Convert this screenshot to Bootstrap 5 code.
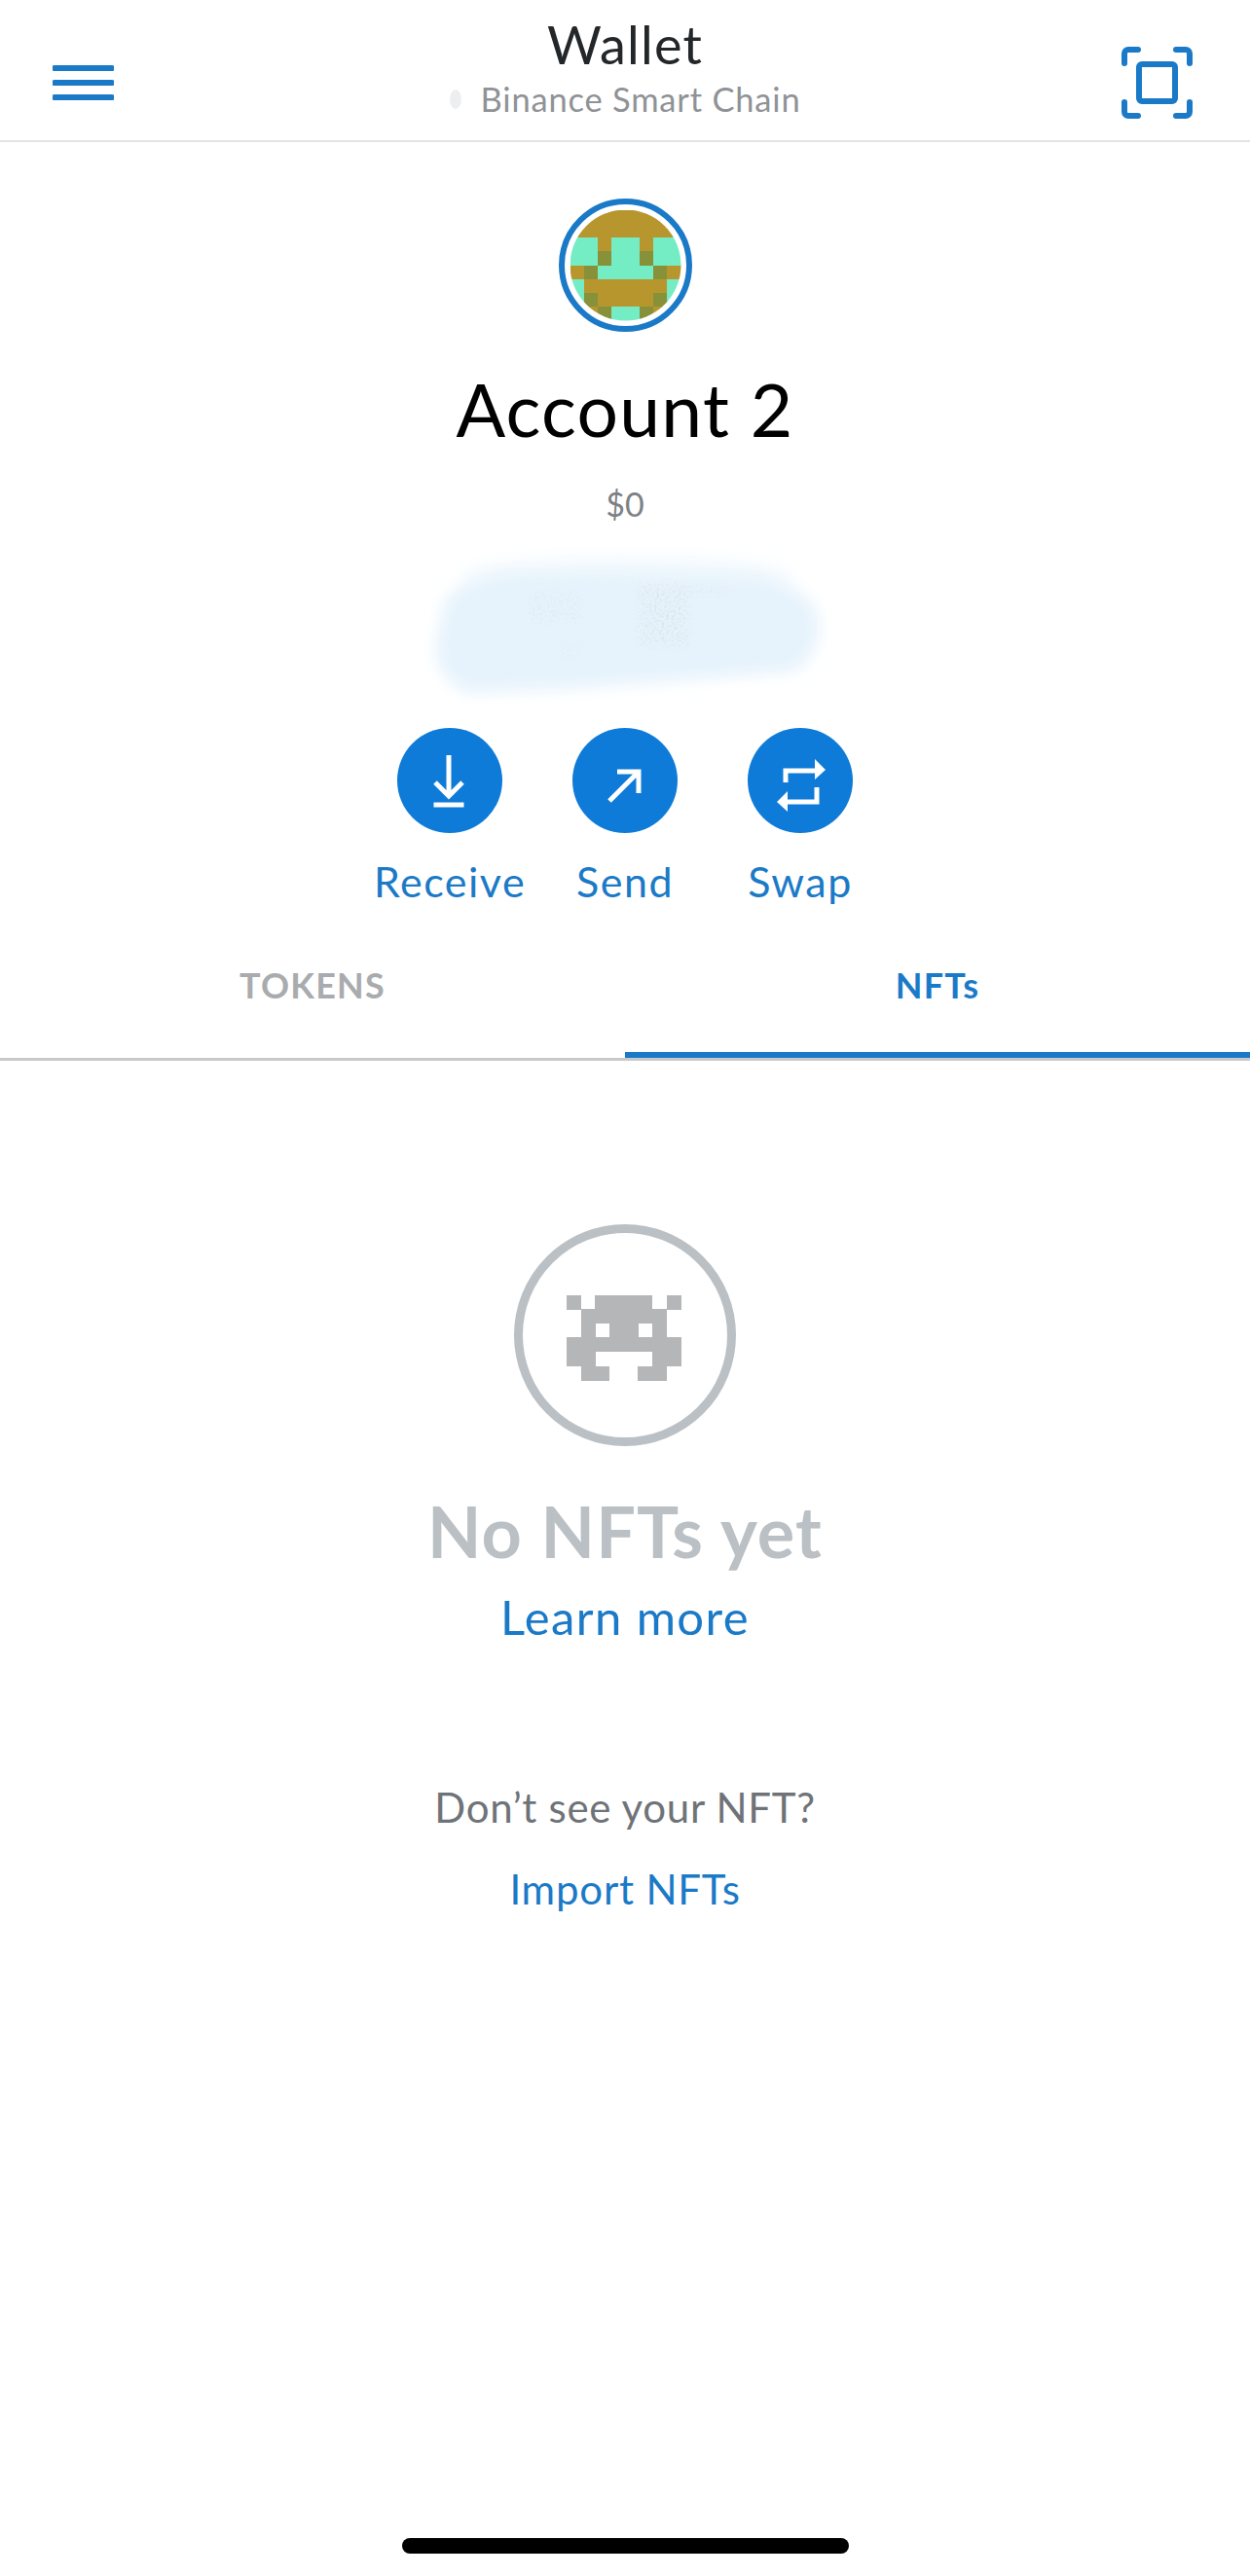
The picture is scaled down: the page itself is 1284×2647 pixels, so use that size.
<!DOCTYPE html>
<html lang="en">
<head>
  <meta charset="UTF-8">
  <meta name="viewport" content="width=device-width, initial-scale=1">
  <title>Wallet</title>
  <link href="https://cdn.jsdelivr.net/npm/bootstrap@5.3.0/dist/css/bootstrap.min.css" rel="stylesheet">
  <style>
    body { font-family: Lato, "Liberation Sans", sans-serif; background: #fff; min-height: 100vh; }
    .top-bar { height: 146px; border-bottom: 2px solid #e3e4e8; }
    .top-side { width: 140px; }
    .top-title { font-size: 54px; line-height: 60px; letter-spacing: 1.2px; color: #24272a; padding-top: 16px; }
    .top-net { font-size: 34.5px; line-height: 40px; letter-spacing: .8px; color: #8f9296; margin-top: 6px; }
    .net-dot { width: 12px; height: 20px; border-radius: 50%; background: #eceef0; margin-right: 20px; }
    .avatar-ring { width: 137px; height: 137px; margin-top: 58px; }
    .account-name { font-size: 75px; line-height: 90px; letter-spacing: 1.3px; color: #000; margin-top: 34px; }
    .account-value { font-size: 34px; line-height: 44px; color: #7d8186; margin-top: 31px; }
    .smudge-box { width: 424px; height: 170px; margin-top: 20px; }
    .action-row { margin-top: 18px; }
    .action-col { width: 180px; }
    .action-circle { width: 108px; height: 108px; border-radius: 50%; background: #0f7bd8; }
    .action-label { font-size: 43px; line-height: 50px; letter-spacing: 1.5px; color: #1b7ac7; margin-top: 25px; margin-bottom: 1px; }
    .tab-bar { border-bottom: 3px solid #c8c9cb; margin-top: 0; }
    .tab-item { flex: 1 1 50%; font-size: 36px; line-height: 44px; font-weight: 700; letter-spacing: 1.2px; text-align: center;
      padding: 58px 0 47px; border-bottom: 6px solid transparent; color: #a9abae; }
    .tab-item.tab-on { color: #1b7ac7; border-bottom-color: #1b7ac7; }
    .empty-ring { width: 228px; height: 228px; margin-top: 168px; }
    .empty-title { font-size: 72px; line-height: 80px; font-weight: 700; letter-spacing: 1.1px; color: #bbc0c5; margin-top: 47px; }
    .empty-link { font-size: 49px; line-height: 56px; letter-spacing: 1.4px; color: #1b7ac7; margin-top: 20px; }
    .empty-note { font-size: 42px; line-height: 50px; letter-spacing: .7px; color: #6f7378; margin-top: 143px; }
    .import-link { font-size: 42px; line-height: 50px; letter-spacing: .8px; color: #1b7ac7; margin-top: 34px; }
    .home-bar { width: 459px; height: 16px; border-radius: 8px; background: #000; margin-top: auto; margin-bottom: 23px; }
  </style>
</head>
<body class="d-flex flex-column align-items-center">

  <header class="top-bar w-100 d-flex justify-content-between">
    <div class="top-side" style="padding: 67px 0 0 54px">
      <svg width="63" height="36" viewBox="0 0 63 36" class="d-block">
        <path d="M2 3H61M2 18H61M2 33H61" stroke="#1b7ac7" stroke-width="6" stroke-linecap="round" fill="none"/>
      </svg>
    </div>
    <div class="text-center">
      <div class="top-title">Wallet</div>
      <div class="top-net d-flex align-items-center justify-content-center">
        <span class="net-dot"></span>Binance Smart Chain
      </div>
    </div>
    <div class="top-side d-flex justify-content-end" style="padding: 48px 59px 0 0">
      <svg width="73" height="74" viewBox="0 0 73 74" class="d-block">
        <g fill="none" stroke="#1b7ac7" stroke-width="6" stroke-linecap="round">
          <path d="M3 17V7a4 4 0 0 1 4-4H17M56 3H66a4 4 0 0 1 4 4V17M3 57V67a4 4 0 0 0 4 4H17M56 71H66a4 4 0 0 0 4-4V57"/>
          <rect x="18" y="18" width="37" height="38" rx="3"/>
        </g>
      </svg>
    </div>
  </header>

  <svg class="avatar-ring d-block" viewBox="0 0 137 137" id="avatar" shape-rendering="geometricPrecision"></svg>
  <div class="account-name">Account 2</div>
  <div class="account-value">$0</div>

  <!-- scribbled out address -->
  <svg class="smudge-box d-block" viewBox="0 0 424 170">
    <defs>
      <filter id="soft" x="-20%" y="-40%" width="140%" height="180%"><feGaussianBlur stdDeviation="8"/></filter>
      <filter id="softer" x="-20%" y="-80%" width="140%" height="260%"><feGaussianBlur stdDeviation="11"/></filter>
      <filter id="grain" x="-30%" y="-30%" width="160%" height="160%">
        <feGaussianBlur in="SourceGraphic" stdDeviation="5" result="shape"/>
        <feTurbulence type="fractalNoise" baseFrequency=".4" numOctaves="2" seed="4" result="noise"/>
        <feColorMatrix in="noise" type="matrix" values="0 0 0 0 .66  0 0 0 0 .70  0 0 0 0 .74  0 0 0 3 -1.3" result="specks"/>
        <feComposite in="specks" in2="shape" operator="in"/>
        <feGaussianBlur stdDeviation=".7"/>
      </filter>
    </defs>
    <ellipse cx="215" cy="36" rx="170" ry="20" fill="#eef7fd" filter="url(#softer)"/>
    <path d="M28 55Q50 32 95 30L345 32Q400 42 410 72Q416 112 385 130Q260 140 150 148L50 152Q16 136 18 100Z" fill="#e6f3fc" filter="url(#soft)"/>
    <g opacity=".3"><rect x="113" y="48" width="54" height="32" fill="#000" filter="url(#grain)"/></g>
    <g opacity=".2"><rect x="145" y="100" width="22" height="16" fill="#000" filter="url(#grain)"/></g>
    <g opacity=".55"><rect x="226" y="40" width="52" height="64" fill="#000" filter="url(#grain)"/></g>
    <g opacity=".3"><rect x="270" y="42" width="50" height="10" fill="#000" filter="url(#grain)"/></g>
  </svg>

  <div class="action-row d-flex justify-content-center">
    <div class="action-col d-flex flex-column align-items-center">
      <div class="action-circle">
        <svg width="108" height="108" viewBox="0 0 108 108" fill="none" stroke="#fff" stroke-width="5">
          <path d="M53 28V70M39 56L53 70L67 56M37.500 79H68.500"/>
        </svg>
      </div>
      <div class="action-label">Receive</div>
    </div>
    <div class="action-col d-flex flex-column align-items-center">
      <div class="action-circle">
        <svg width="108" height="108" viewBox="0 0 108 108" fill="none" stroke="#fff" stroke-width="5">
          <path d="M38 75L68 45M46 45H68V67"/>
        </svg>
      </div>
      <div class="action-label">Send</div>
    </div>
    <div class="action-col d-flex flex-column align-items-center">
      <div class="action-circle">
        <svg width="108" height="108" viewBox="0 0 108 108" fill="none" stroke="#fff" stroke-width="5">
          <path d="M39 56V44H70M71 61V76H40"/>
          <path d="M69 32L80 43L69 53Z M41 65L30 76L41 86Z" fill="#fff" stroke="none"/>
        </svg>
      </div>
      <div class="action-label">Swap</div>
    </div>
  </div>

  <div class="tab-bar d-flex w-100">
    <div class="tab-item">TOKENS</div>
    <div class="tab-item tab-on">NFTs</div>
  </div>

  <svg class="empty-ring d-block" viewBox="0 0 228 228" id="invader"></svg>
  <div class="empty-title">No NFTs yet</div>
  <div class="empty-link">Learn more</div>
  <div class="empty-note">Don’t see your NFT?</div>
  <div class="import-link">Import NFTs</div>

  <div class="home-bar"></div>

  <script src="https://cdn.jsdelivr.net/npm/bootstrap@5.3.0/dist/js/bootstrap.bundle.min.js"></script>
  <script>
    // pixel avatar, b = brown, t = teal, o = olive
    const avatarRows = ['bbbbbbbb', 'bbbbbbbb', 'ttbttbtt', 'ttottott', 'bottttob', 'tbbbbbbt', 'tobbbbot', 'bbottobb'];
    const avatarColors = { b: '#b8962e', t: '#74ecc4', o: '#87913a' };
    let avatarSvg = '<defs><clipPath id="av"><circle cx="68.5" cy="68.5" r="57"/></clipPath></defs><g clip-path="url(#av)" shape-rendering="crispEdges">';
    avatarRows.forEach((row, y) => {
      [...row].forEach((c, x) => {
        avatarSvg += `<rect x="${11.5 + x * 14.25}" y="${11.5 + y * 14.25}" width="14.5" height="14.5" fill="${avatarColors[c]}"/>`;
      });
    });
    avatarSvg += '</g><circle cx="68.5" cy="68.5" r="65.5" fill="none" stroke="#1b7ac7" stroke-width="6"/>';
    document.getElementById('avatar').innerHTML = avatarSvg;

    const invaderRows = ['#.####.#', '.######.', '.#.##.#.', '########', '##....##', '.##..##.'];
    let invaderSvg = '<circle cx="114" cy="114" r="109.5" fill="none" stroke="#bbc0c5" stroke-width="9"/><g shape-rendering="crispEdges">';
    invaderRows.forEach((row, y) => {
      [...row].forEach((c, x) => {
        if (c === '#') invaderSvg += `<rect x="${54 + x * 14.65}" y="${72.5 + y * 14.65}" width="15" height="15" fill="#b5b6b8"/>`;
      });
    });
    invaderSvg += '</g>';
    document.getElementById('invader').innerHTML = invaderSvg;
  </script>
</body>
</html>
